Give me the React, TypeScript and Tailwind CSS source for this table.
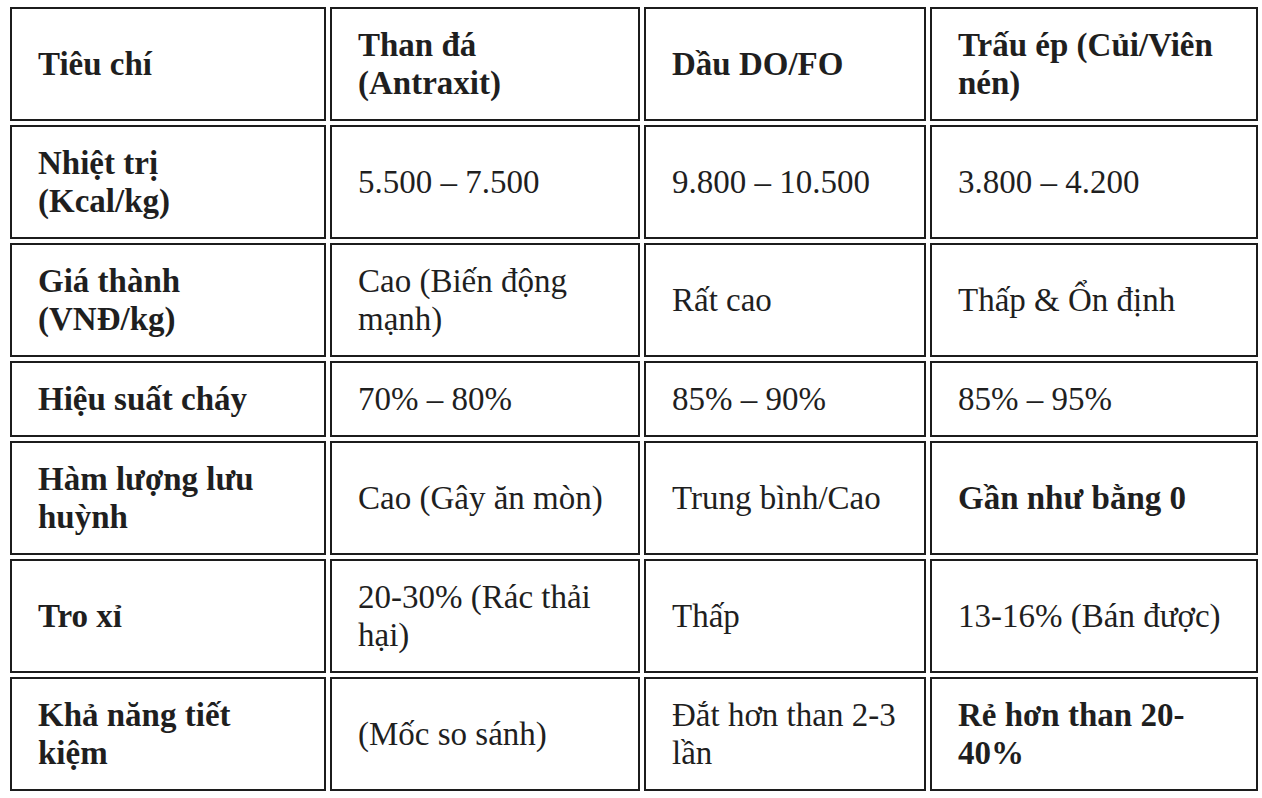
import React from 'react';

type Cell = { text: string; bold?: boolean };

const header: string[] = ['Tiêu chí', 'Than đá (Antraxit)', 'Dầu DO/FO', 'Trấu ép (Củi/Viên nén)'];

const rows: Cell[][] = [
    [{ text: 'Nhiệt trị (Kcal/kg)', bold: true }, { text: '5.500 – 7.500' }, { text: '9.800 – 10.500' }, { text: '3.800 – 4.200' }],
    [{ text: 'Giá thành (VNĐ/kg)', bold: true }, { text: 'Cao (Biến động mạnh)' }, { text: 'Rất cao' }, { text: 'Thấp & Ổn định' }],
    [{ text: 'Hiệu suất cháy', bold: true }, { text: '70% – 80%' }, { text: '85% – 90%' }, { text: '85% – 95%' }],
    [{ text: 'Hàm lượng lưu huỳnh', bold: true }, { text: 'Cao (Gây ăn mòn)' }, { text: 'Trung bình/Cao' }, { text: 'Gần như bằng 0', bold: true }],
    [{ text: 'Tro xỉ', bold: true }, { text: '20-30% (Rác thải hại)' }, { text: 'Thấp' }, { text: '13-16% (Bán được)' }],
    [{ text: 'Khả năng tiết kiệm', bold: true }, { text: '(Mốc so sánh)' }, { text: 'Đắt hơn than 2-3 lần' }, { text: 'Rẻ hơn than 20-40%', bold: true }],
];

const cellCls = 'border-2 border-[#1c1c1c] px-[26px] py-[17px] align-middle text-left';

export default function App() {
    return (
        <div className="bg-white min-h-[798px] font-[Liberation_Serif,Times_New_Roman,serif] text-[33px] leading-[38px] text-[#1f1f1f]">
            <table className="table-fixed border-separate border-spacing-[4px] ml-[6px] mt-[3px] w-[1256px]">
                <colgroup>
                    <col className="w-[316px]" />
                    <col className="w-[310px]" />
                    <col className="w-[282px]" />
                    <col className="w-[328px]" />
                </colgroup>
                <thead>
                    <tr>
                        {header.map((h) => (
                            <th key={h} className={`${cellCls} font-bold`}>{h}</th>
                        ))}
                    </tr>
                </thead>
                <tbody>
                    {rows.map((r, i) => (
                        <tr key={i}>
                            {r.map((c, j) => (
                                <td key={j} className={`${cellCls} ${c.bold ? 'font-bold' : 'font-normal'}`}>{c.text}</td>
                            ))}
                        </tr>
                    ))}
                </tbody>
            </table>
        </div>
    );
}
